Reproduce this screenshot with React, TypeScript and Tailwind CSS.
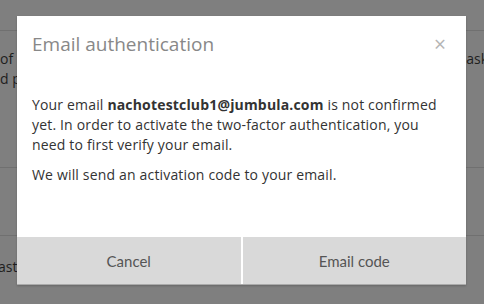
export default function App() {
  return (
    <div className="relative w-[484px] h-[304px] overflow-hidden bg-[#7f7f7f] font-['Segoe_UI','Open_Sans',sans-serif]">
      {/* page behind the overlay */}
      <div className="text-[14px] text-[#1e1e1e]">
        <div className="h-[31px] border-b border-[#707070]" />
        <div className="flex justify-between pt-[18px] leading-[20px]">
          <div>
            <div>of</div>
            <div>d p</div>
          </div>
          <div className="-mr-[4px]">ask</div>
        </div>
        <div className="mt-[78px] border-b border-[#707070]" />
        <div className="mt-[67px] border-b border-[#707070]" />
        <div className="pt-[20px] -ml-[2px]">ast</div>
      </div>

      <div className="absolute left-[17px] top-[16px] w-[449px] bg-white flex flex-col shadow-[0_1px_2px_rgba(0,0,0,0.2)]">
        <div className="flex items-center justify-between pl-[15px] pr-[20px] pt-[14px]">
          <h2 className="text-[19px] text-[#888] leading-[28px]">Email authentication</h2>
          <span className="text-[21px] text-[#b5b5b5] leading-none">×</span>
        </div>
        <div className="px-[15px] pt-[37px] pb-[52px] text-[14px] text-[#333] leading-[20px] tracking-[0.17px]">
          <p>
            Your email <b>nachotestclub1@jumbula.com</b> is not confirmed yet. In order to activate the two-factor authentication, you need to first verify your email.
          </p>
          <p className="mt-[10px]">We will send an activation code to your email.</p>
        </div>
        <div className="flex gap-[2px] h-[48px] border-b border-[#aaa] font-['Lato',sans-serif] text-[15px] text-[#555]">
          <button className="flex-1 bg-[#d9d9d9] pt-[2px]">Cancel</button>
          <button className="flex-1 bg-[#d9d9d9] pt-[2px]">Email code</button>
        </div>
      </div>
    </div>
  );
}
